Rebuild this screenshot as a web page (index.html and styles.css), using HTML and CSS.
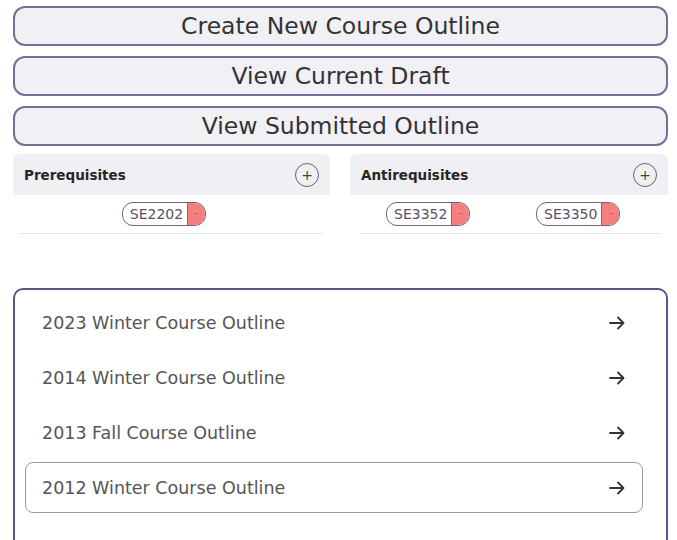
FILE: index.html
```html
<!DOCTYPE html>
<html>
<head>
<meta charset="utf-8">
<link rel="stylesheet" href="styles.css">
</head>
<body>
<div class="page">
  <div class="actions">
    <button class="action-btn">Create New Course Outline</button>
    <button class="action-btn">View Current Draft</button>
    <button class="action-btn">View Submitted Outline</button>
  </div>
  <div class="reqs">
    <div class="req-col">
      <div class="req-head">
        <span class="req-title">Prerequisites</span>
        <span class="add-btn">+</span>
      </div>
      <div class="req-body req-body-pre">
        <span class="chip"><span class="chip-label">SE2202</span><span class="chip-del">-</span></span>
      </div>
    </div>
    <div class="req-col">
      <div class="req-head">
        <span class="req-title">Antirequisites</span>
        <span class="add-btn">+</span>
      </div>
      <div class="req-body req-body-anti">
        <span class="chip"><span class="chip-label">SE3352</span><span class="chip-del">-</span></span>
        <span class="chip"><span class="chip-label">SE3350</span><span class="chip-del">-</span></span>
      </div>
    </div>
  </div>
  <div class="outline-panel">
    <div class="outline-item"><span>2023 Winter Course Outline</span><svg class="arrow" viewBox="0 0 16 14" width="16" height="14"><path d="M1 7H14.5M9 1.5L14.5 7L9 12.5" fill="none" stroke="#333" stroke-width="1.8" stroke-linecap="round" stroke-linejoin="round"/></svg></div>
    <div class="outline-item"><span>2014 Winter Course Outline</span><svg class="arrow" viewBox="0 0 16 14" width="16" height="14"><path d="M1 7H14.5M9 1.5L14.5 7L9 12.5" fill="none" stroke="#333" stroke-width="1.8" stroke-linecap="round" stroke-linejoin="round"/></svg></div>
    <div class="outline-item"><span>2013 Fall Course Outline</span><svg class="arrow" viewBox="0 0 16 14" width="16" height="14"><path d="M1 7H14.5M9 1.5L14.5 7L9 12.5" fill="none" stroke="#333" stroke-width="1.8" stroke-linecap="round" stroke-linejoin="round"/></svg></div>
    <div class="outline-item hovered"><span>2012 Winter Course Outline</span><svg class="arrow" viewBox="0 0 16 14" width="16" height="14"><path d="M1 7H14.5M9 1.5L14.5 7L9 12.5" fill="none" stroke="#333" stroke-width="1.8" stroke-linecap="round" stroke-linejoin="round"/></svg></div>
  </div>
</div>
</body>
</html>
```
FILE: styles.css
```css
html, body {
  margin: 0;
  padding: 0;
  background: #ffffff;
  font-family: "DejaVu Sans", Verdana, sans-serif;
  overflow: hidden;
}
.page {
  padding: 6px 9px 0 13px;
  width: 655px;
}
.actions {
  display: flex;
  flex-direction: column;
  gap: 10px;
}
.action-btn {
  height: 40px;
  width: 100%;
  border: 2px solid #776d98;
  border-radius: 12px;
  background: #f1f0f5;
  color: #333;
  font-family: "DejaVu Sans", Verdana, sans-serif;
  font-size: 23.5px;
  padding: 0;
  line-height: 36px;
}
.reqs {
  display: grid;
  grid-template-columns: 317px 318px;
  gap: 20px;
  margin-top: 8px;
}
.req-head {
  height: 41px;
  background: #f0eff3;
  border-radius: 6px 6px 0 0;
  display: flex;
  align-items: center;
  justify-content: space-between;
  padding: 0 11px 0 11px;
}
.req-title {
  font-weight: bold;
  font-size: 13.5px;
  color: #262626;
}
.add-btn {
  width: 22px;
  height: 22px;
  border: 1.5px solid #66606f;
  border-radius: 50%;
  display: flex;
  align-items: center;
  justify-content: center;
  font-size: 14px;
  color: #444;
  line-height: 1;
}
.req-body {
  margin: 0 8px 0 7px;
  height: 38px;
  border-bottom: 1px solid #e4e3e8;
  display: flex;
  align-items: center;
}
.req-body-pre {
  justify-content: center;
  padding-right: 14px;
}
.req-body-anti {
  margin: 0 8px 0 10px;
  display: grid;
  grid-template-columns: 150px 150px;
  justify-items: start;
  padding-left: 26px;
  gap: 0;
}
.chip {
  display: inline-flex;
  align-items: stretch;
  height: 22px;
  border: 1px solid #6d6885;
  border-radius: 11px;
  overflow: hidden;
  background: #fff;
}
.chip-label {
  font-size: 14px;
  color: #555266;
  line-height: 22px;
  padding: 0 4px 0 7px;
}
.chip-del {
  width: 17px;
  background: #f57f7d;
  border-left: 1px solid #8a6a78;
  color: #c65b5b;
  font-size: 12px;
  line-height: 20px;
  text-align: center;
}
.outline-panel {
  margin-top: 54px;
  border: 2px solid #5f5287;
  border-radius: 10px;
  height: 300px;
  padding: 7px 23px 0 10px;
  display: flex;
  flex-direction: column;
  gap: 4px;
}
.outline-item {
  height: 51px;
  box-sizing: border-box;
  display: flex;
  align-items: center;
  justify-content: space-between;
  padding: 0 17px 0 16px;
  border: 1px solid transparent;
  border-radius: 8px;
  font-size: 17.5px;
  color: #555;
}
.outline-item.hovered {
  border-color: #9c97ab;
}
.arrow {
  display: block;
}
```
